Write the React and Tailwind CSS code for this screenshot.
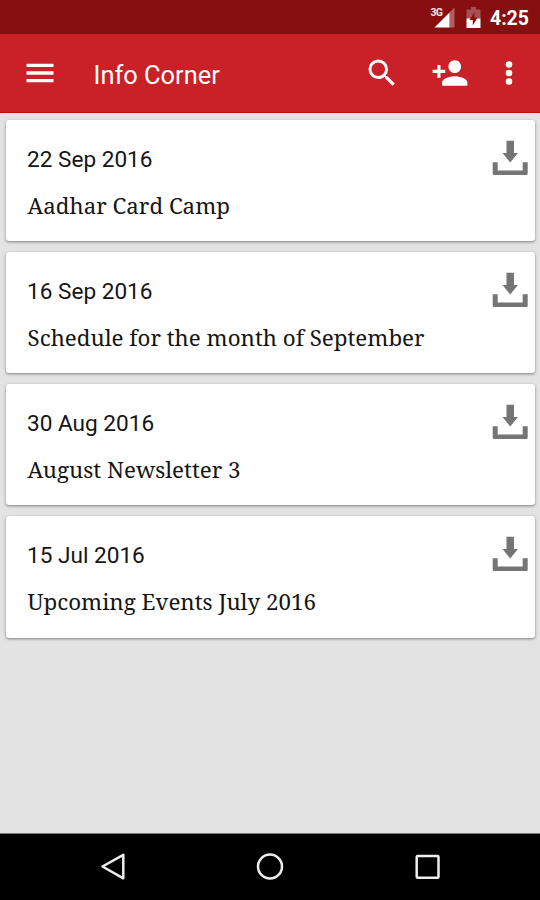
const items = [
  { date: '22 Sep 2016', title: 'Aadhar Card Camp' },
  { date: '16 Sep 2016', title: 'Schedule for the month of September' },
  { date: '30 Aug 2016', title: 'August Newsletter 3' },
  { date: '15 Jul 2016', title: 'Upcoming Events July 2016' },
]

function StatusBar() {
  return (
    <div className="h-[34px] shrink-0 bg-[#870f10] flex items-center justify-end pr-[11px] text-white">
      <svg className="w-[25px] h-[22px] mr-[11px]" viewBox="0 0 25 22">
        <path d="M24.500 1.500v20h-5V6.500z" fill="#b35f60" />
        <path d="M19.500 6.500v15H4.500z" fill="#fff" />
        <text x="0.5" y="10" fontSize="10.500" fontWeight="700" fontFamily="Roboto" letterSpacing="-0.800" fill="#f6e4e4">3G</text>
      </svg>
      <svg className="w-[15px] h-[21px] mr-[9px]" viewBox="0 0 15 21">
        <path d="M5 0h5v2.500h4.500V12H.500V2.500H5z" fill="#a85052" />
        <path d="M.500 11.500h14V21H.500z" fill="#fff" />
        <path d="M8.500 5 3.500 13h3.300v5.500L11.500 10.500H8.500z" fill="#870f10" />
      </svg>
      <span className="text-[19.500px] leading-none font-bold pt-[3px]">4:25</span>
    </div>
  )
}

function Toolbar() {
  return (
    <div className="h-[79px] shrink-0 bg-[#c92127] border-b border-[#c20b10] flex items-center text-white">
      <svg className="w-9 h-9 ml-[22px]" viewBox="0 0 24 24" fill="currentColor">
        <path d="M3 18.200h18v-2.200H3zm0-5.100h18v-2.200H3zm0-7.300v2.200h18V5.800z" />
      </svg>
      <h1 className="ml-[35.500px] mt-[5px] text-[25.400px] leading-none whitespace-nowrap">Info Corner</h1>
      <div className="ml-auto flex items-center">
        <svg className="w-9 h-9 mr-[31px]" viewBox="0 0 24 24" fill="currentColor">
          <path d="M15.500 14h-.790l-.280-.270A6.471 6.471 0 0 0 16 9.500 6.500 6.500 0 1 0 9.500 16c1.610 0 3.090-.590 4.230-1.570l.270.280v.790l5 4.990L20.490 19l-4.990-5zm-6 0C7.010 14 5 11.990 5 9.500S7.010 5 9.500 5 14 7.010 14 9.500 11.990 14 9.500 14z" />
        </svg>
        <svg className="w-[38px] h-[38px] mr-[30px]" viewBox="0 0 24 24" fill="currentColor">
          <path d="M15 12c2.210 0 4-1.790 4-4s-1.790-4-4-4-4 1.790-4 4 1.790 4 4 4zm-9-2V7H4v3H1v2h3v3h2v-3h3v-2H6zm9 4c-2.670 0-8 1.340-8 4v2h16v-2c0-2.660-5.330-4-8-4z" />
        </svg>
        <svg className="w-5 h-7 mr-[21px]" viewBox="0 0 20 28" fill="currentColor">
          <circle cx="10" cy="5.500" r="3.300" />
          <circle cx="10" cy="14" r="3.300" />
          <circle cx="10" cy="22.500" r="3.300" />
        </svg>
      </div>
    </div>
  )
}

function DownloadIcon() {
  return (
    <svg className="w-9 h-9 mt-5 mr-[7px] shrink-0" viewBox="0 0 36 36" fill="#757575">
      <path d="M14.500 .700h7.500v12.300h4L18.200 22.500 10.500 13h4z" />
      <path d="M.700 22.200h5v8.300h25v-8.300h5v11.300q0 1.500-1.500 1.500h-32q-1.500 0-1.500-1.500z" />
    </svg>
  )
}

function Card({ item }) {
  return (
    <div className="h-[121.500px] bg-white rounded-[3px] shadow-[0_1px_3px_rgba(0,0,0,0.45)] flex justify-between">
      <div className="pl-[21px] pt-[26.300px] text-[#151515] whitespace-nowrap">
        <p className="text-[22.600px] leading-7">{item.date}</p>
        <p className="mt-[16px] pl-[0.500px] text-[22.330px] leading-8 font-['Noto_Serif','DejaVu_Serif_Condensed','DejaVu_Serif',serif]">
          {item.title}
        </p>
      </div>
      <DownloadIcon />
    </div>
  )
}

function NavBar() {
  return (
    <div className="h-[67px] shrink-0 bg-black border-t border-[#777] flex items-center justify-between px-[98px]">
      <svg className="w-[30px] h-[30px]" viewBox="0 0 30 30" fill="none" stroke="#eee" strokeWidth="2.500">
        <path d="M25.300 2.800v23.500L4.500 14.500z" strokeLinejoin="round" />
      </svg>
      <svg className="w-[30px] h-[30px]" viewBox="0 0 30 30" fill="none" stroke="#eee" strokeWidth="2.500">
        <circle cx="15" cy="14.500" r="12" />
      </svg>
      <svg className="w-[30px] h-[30px]" viewBox="0 0 30 30" fill="none" stroke="#eee" strokeWidth="2.500">
        <rect x="4.700" y="4" width="21.800" height="21.800" rx="1" />
      </svg>
    </div>
  )
}

export default function App() {
  return (
    <div className="w-[540px] h-[900px] flex flex-col bg-[#e3e3e3] font-[Roboto,sans-serif] overflow-hidden">
      <StatusBar />
      <Toolbar />
      <div className="flex-1 pt-[6.800px] pl-1.5 pr-[5px] flex flex-col gap-[10.600px]">
        {items.map((item) => (
          <Card key={item.date} item={item} />
        ))}
      </div>
      <NavBar />
    </div>
  )
}
